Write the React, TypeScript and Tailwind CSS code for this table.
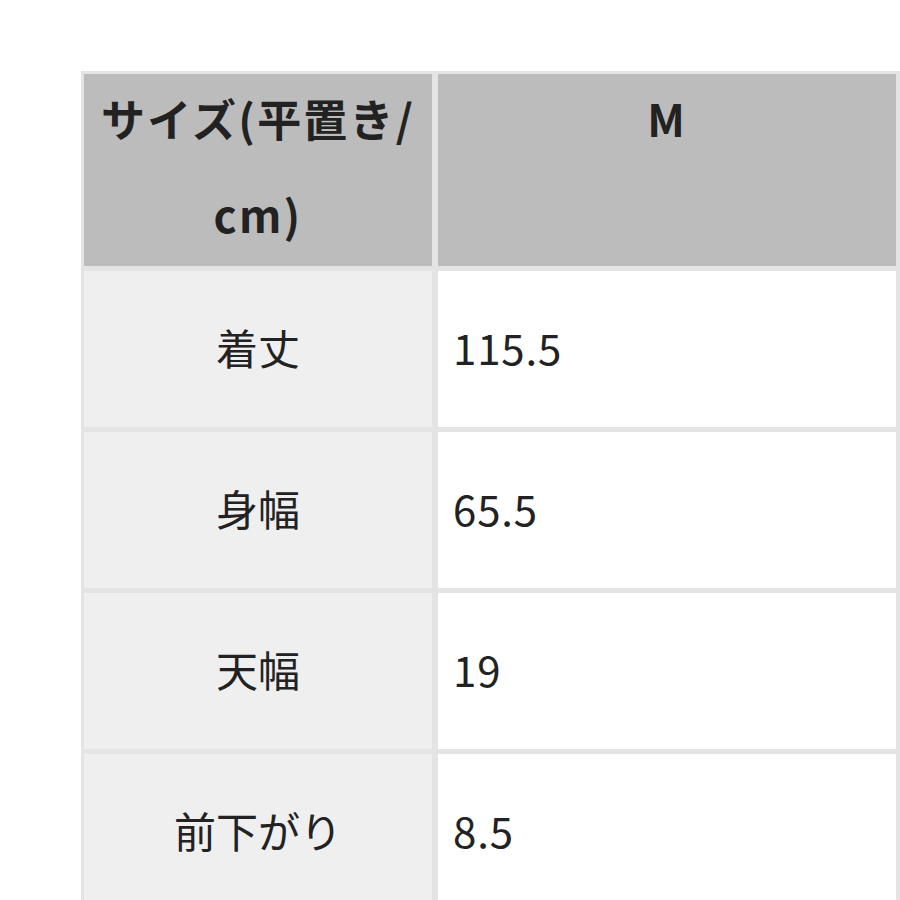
const rows = [
  { label: '着丈', value: '115.5' },
  { label: '身幅', value: '65.5' },
  { label: '天幅', value: '19' },
  { label: '前下がり', value: '8.5' },
];

const font = { fontFamily: '"Noto Sans CJK JP", "Noto Sans", sans-serif' };

export default function App() {
  return (
    <div className="min-h-[900px] bg-white pl-[81px] pt-[71px]" style={font}>
      <div className="grid w-[819px] grid-cols-[348px_458px] gap-x-[6px] gap-y-[5px] bg-[#e4e4e4] p-[3px] text-[42px] text-[#222]">
        <div className="h-[192px] bg-[#bcbcbc] text-center text-[44px] font-bold leading-[96px] tracking-[0.05em]">
          <div className="-mt-[4px]">サイズ(平置き/<br />cm)</div>
        </div>
        <div className="h-[192px] bg-[#bcbcbc] text-center text-[44px] font-bold leading-[96px] tracking-[0.05em]">
          <div className="-mt-[4px]">M</div>
        </div>
        {rows.map(r => (
          <div key={r.label} className="contents">
            <div className="flex h-[156px] items-center justify-center bg-[#efefef] pb-[6px]">{r.label}</div>
            <div className="flex h-[156px] items-center bg-white pb-[6px] pl-[15px] tracking-[0.02em]">{r.value}</div>
          </div>
        ))}
      </div>
    </div>
  );
}
